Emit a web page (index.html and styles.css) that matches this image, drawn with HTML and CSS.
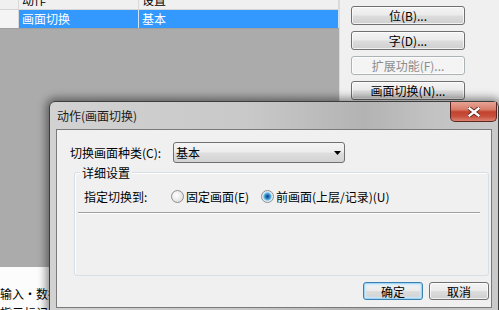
FILE: index.html
```html
<!DOCTYPE html>
<html lang="zh-CN">
<head>
<meta charset="UTF-8">
<title>动作(画面切换)</title>
<link rel="stylesheet" href="styles.css">
</head>
<body>

<div class="main">
    <div class="list">
        <div class="list-row list-head">
            <span class="cell"></span><span class="cell">动作</span><span class="cell">设置</span>
        </div>
        <div class="list-row">
            <span class="cell"></span><span class="cell sel">画面切换</span><span class="cell sel">基本</span>
        </div>
        <div class="list-empty"></div>
        <div class="status">
            <p>输入・数据设置</p>
            <p>指示标记</p>
        </div>
    </div>
    <div class="side">
        <button class="btn">位(B)...</button>
        <button class="btn">字(D)...</button>
        <button class="btn" disabled>扩展功能(F)...</button>
        <button class="btn">画面切换(N)...</button>
    </div>
</div>

<div class="dialog">
    <div class="dlg-title">
        <span>动作(画面切换)</span>
        <div class="dlg-close">
            <svg width="12" height="10" viewBox="0 0 12 10">
                <path d="M1.5 1.5 L10.5 8.5 M10.5 1.5 L1.5 8.5" stroke="#5a1e16" stroke-width="4" stroke-linecap="square"/>
                <path d="M1.5 1.5 L10.5 8.5 M10.5 1.5 L1.5 8.5" stroke="#fff" stroke-width="2.4" stroke-linecap="square"/>
            </svg>
        </div>
    </div>
    <div class="dlg-body">
        <div class="client">
            <div class="combo-row">
                <label>切换画面种类(C):</label>
                <div class="combo">
                    <span>基本</span>
                    <svg class="arrow" width="7" height="4" viewBox="0 0 7 4"><polygon points="0,0 7,0 3.5,4" fill="#000"/></svg>
                </div>
            </div>
            <div class="group">
                <span class="group-title">详细设置</span>
                <div class="choice-row">
                    <span class="choice-label">指定切换到:</span>
                    <span class="opt opt-first"><i class="radio"></i>固定画面(E)</span>
                    <span class="opt"><i class="radio checked"></i>前画面(上层/记录)(U)</span>
                </div>
                <div class="sep"></div>
            </div>
            <div class="dlg-buttons">
                <button class="btn btn-default">确定</button>
                <button class="btn">取消</button>
            </div>
        </div>
    </div>
</div>

</body>
</html>
```

FILE: styles.css
```css
* {
    box-sizing: border-box;
}

body {
    margin: 0;
    width: 499px;
    height: 310px;
    overflow: hidden;
    position: relative;
    background: #f0f0f0;
    font-family: "Noto Sans CJK SC", "Liberation Sans", sans-serif;
    font-size: 12px;
    color: #000;
}

.main {
    display: flex;
    height: 310px;
    overflow: hidden;
}

/* 左侧列表 */
.list {
    width: 340px;
    display: flex;
    flex-direction: column;
    border-right: 1px solid #dcdcdc;
}

.list > * {
    flex-shrink: 0;
}

.list-row {
    display: grid;
    grid-template-columns: 19px 120px 200px;
    height: 19px;
    border-bottom: 1px solid #a0a0a0;
}

.list-head {
    margin-top: -10px;
    height: 20px;
    border-bottom-color: #d5d5d5;
    background: #f0f0f0;
}

.cell {
    border-right: 1px solid #d9d9d9;
    padding-left: 3px;
    line-height: 18px;
    white-space: nowrap;
    overflow: hidden;
    background: #f4f4f4;
}

.list-head .cell {
    background: #f0f0f0;
    line-height: 19px;
}

.cell.sel {
    background: #3399ff;
    color: #fff;
    border-right-color: #d0e4f7;
}

.list-empty {
    height: 238px;
    background: #ababab;
}

.status {
    height: 60px;
    background: #fcfcfc;
    padding-top: 17px;
}

.status p {
    margin: 0;
    line-height: 19px;
    white-space: nowrap;
}

/* 右侧按钮 */
.side {
    flex: 1;
    display: flex;
    flex-direction: column;
    gap: 6px;
    padding: 6px 0 0 11px;
}

.btn {
    width: 114px;
    height: 19px;
    padding: 0;
    border: 1px solid #707070;
    border-radius: 3px;
    background: linear-gradient(#f4f4f4, #ebebeb 48%, #dddddd 52%, #cfcfcf);
    font-family: inherit;
    font-size: 12px;
    line-height: 16px;
    color: #000;
    box-shadow: inset 0 0 0 1px rgba(255,255,255,0.7);
}

.btn:disabled {
    border-color: #adb2b5;
    background: #f4f4f4;
    color: #8d8d8d;
}

/* 对话框 */
.dialog {
    position: absolute;
    left: 49px;
    top: 101px;
    width: 450px;
    height: 230px;
    border: 1px solid #3d3d3d;
    border-radius: 6px 6px 0 0;
    background: linear-gradient(to right, #d2d2d2, #c8c8c8 45%, #b3b3b3 70%, #c2c2c2 85%, #cacaca);
    box-shadow: 0 0 9px 3px rgba(0,0,0,0.45);
}

.dlg-title {
    display: flex;
    height: 27px;
}

.dlg-title span {
    padding-left: 7px;
    line-height: 27px;
    color: #1a1a1a;
}

.dlg-close {
    margin-left: auto;
    margin-right: 1px;
    width: 47px;
    height: 20px;
    border: 1px solid #5b2720;
    border-top: none;
    border-radius: 0 0 5px 5px;
    background: linear-gradient(#e8a393, #d77c69 40%, #c2432e 52%, #c8503c 75%, #dc8270);
    display: flex;
    align-items: center;
    justify-content: center;
}

.dlg-body {
    padding: 0 6px 6px;
}

.client {
    height: 179px;
    border: 1px solid #7a7a7a;
    background: #f0f0f0;
    display: flex;
    flex-direction: column;
}

.combo-row {
    display: flex;
    align-items: center;
    height: 21px;
    margin: 12px 0 0 13px;
}

.combo-row label {
    width: 103px;
}

.combo {
    width: 172px;
    height: 21px;
    display: flex;
    align-items: center;
    padding: 0 3px 0 2px;
    border: 1px solid #707070;
    border-radius: 3px;
    background: linear-gradient(#f4f4f4, #ececec 48%, #dedede 52%, #d3d3d3);
}

.combo .arrow {
    margin-left: auto;
}

.group {
    margin: 9px 0 0 17px;
    width: 415px;
    height: 104px;
    border: 1px solid #d5dfe5;
    border-radius: 3px;
    box-shadow: inset 1px 1px 0 #fff;
}

.group-title {
    display: block;
    width: fit-content;
    height: 13px;
    line-height: 13px;
    margin: -7px 0 0 5px;
    padding: 0 2px;
    background: #f0f0f0;
}

.choice-row {
    display: flex;
    align-items: center;
    height: 13px;
    margin: 11px 0 0 9px;
    white-space: nowrap;
}

.choice-label {
    width: 87px;
}

.opt {
    display: flex;
    align-items: center;
}

.opt-first {
    width: 90px;
}

.radio {
    width: 13px;
    height: 13px;
    margin-right: 2px;
    border: 1px solid #8e8f8f;
    border-radius: 50%;
    background: radial-gradient(circle at 40% 40%, #ffffff, #e6e6e6 60%, #cfcfcf);
}

.radio.checked {
    background: radial-gradient(circle, #0e3d6b 0, #2a7bc1 2px, #6bbbe8 3.5px, #c8e6f6 4.5px, #f2f2f2 5.5px);
}

.sep {
    margin: 9px 0 0 3px;
    width: 402px;
    border-top: 1px solid #a0a0a0;
    border-bottom: 1px solid #fff;
}

.dlg-buttons {
    display: flex;
    justify-content: flex-end;
    gap: 6px;
    margin: 6px 2px 0 0;
}

.dlg-buttons .btn {
    width: 60px;
    height: 18px;
    line-height: 15px;
}

.btn-default {
    border-color: #3c7fb1;
    box-shadow: inset 0 0 0 1px #9fd6f6, inset 0 0 2px 2px #cdeafa;
}
```
